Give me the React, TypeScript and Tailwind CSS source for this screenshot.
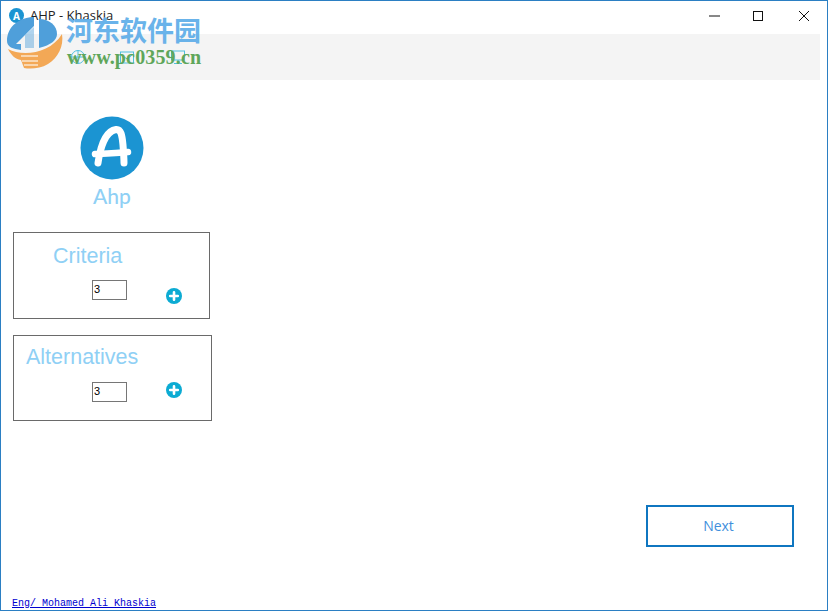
import React from "react";

function AhpLogo() {
  return (
    <svg width="64" height="64" viewBox="0 0 64 64">
      <circle cx="32" cy="32" r="31.5" fill="#1b94d2" />
      <path d="M18 47 C20 33 25 15 36 13.500 C41 13 42 19 43 29 C43.500 36 44 42 44 47" fill="none" stroke="#fff" strokeWidth="7" strokeLinecap="round" />
      <path d="M15 38 C26 37.500 38 37 48 36" fill="none" stroke="#fff" strokeWidth="6.500" strokeLinecap="round" />
    </svg>
  );
}

function AddIcon() {
  return (
    <svg width="16" height="16" viewBox="0 0 16 16">
      <circle cx="8" cy="8" r="8" fill="#0cabd3" />
      <path d="M8 4.200V11.800M4.200 8H11.800" stroke="#fff" strokeWidth="2.600" strokeLinecap="round" />
    </svg>
  );
}

function Watermark() {
  return (
    <div className="absolute left-[3px] top-[13px] flex items-start pointer-events-none">
      <svg width="60" height="56" viewBox="0 0 60 56">
        <path d="M3 27 C3 12 16 3 30 3 L30 12 L12 30 L17 30 L17 36 C9 35 3 33 3 27 Z" fill="#4f9fda" />
        <path d="M35 5 C46 5 53 12 53 20 C53 26 47 31 35 34 Z" fill="#4f9fda" />
        <path d="M21 21 L30 13 L30 34 L21 34 Z" fill="#4f9fda" opacity="0.450" />
        <path d="M4 35 C18 43 46 40 58 20 C60 32 54 44 44 50 C36 55 26 55 20 54 L17 46 C11 45 7 41 4 35 Z" fill="#f3a856" />
        <path d="M17 42 H34 M18 47 H34 M20 51 H34" stroke="#fff" strokeWidth="1.500" opacity="0.700" />
      </svg>
    </div>
  );
}

function WatermarkText() {
  return (
    <div className="absolute left-[65px] top-[11px] pointer-events-none">
      <div className="text-[27px] leading-[36px] font-bold text-[#62afe9] [font-family:'Noto_Sans_CJK_SC',sans-serif] opacity-95">河东软件园</div>
      <div className="text-[20px] leading-[22px] mt-[-2px] font-bold text-[#5fa65a] tracking-[0.15px] ml-[1px] [font-family:'Liberation_Serif',serif]">www.pc0359.cn</div>
    </div>
  );
}

function ToolIcon({ kind }: { kind: number }) {
  return (
    <svg width="16" height="16" viewBox="0 0 16 16" fill="none" stroke="#4fc0e0" strokeWidth="1">
      {kind === 0 && <><circle cx="8" cy="8" r="6.500" /><path d="M1.500 8H14.500M8 1.500V14.500" /></>}
      {kind === 1 && <><rect x="1.500" y="3" width="13" height="11" /><path d="M1.500 5L8 10L14.500 5" /></>}
      {kind === 2 && <><rect x="1.500" y="2" width="13" height="9" /><path d="M8 11V14M4 14.500H12" /></>}
    </svg>
  );
}

function Box({ title, w, h, titleCls, inputTop, addCls, mt }: { title: string; w: string; h: string; titleCls: string; inputTop: string; addCls: string; mt: string }) {
  return (
    <div className={`${w} ${h} ${mt} ml-[12px] border border-[#6a6a6a] [font-family:'Liberation_Sans',sans-serif]`}>
      <div className={`text-[21.5px] leading-[24px] text-[#8fd0f5] ${titleCls}`}>{title}</div>
      <div className={`flex items-start ml-[78px] ${inputTop}`}>
        <div className="w-[35px] h-[20px] border border-[#767676] text-[11px] leading-[16px] pl-[1px] text-black bg-white">3</div>
        <div className={addCls}><AddIcon /></div>
      </div>
    </div>
  );
}

export default function App() {
  return (
    <div className="relative w-[828px] h-[611px] overflow-hidden bg-white border border-[#2b7fc3] box-border">
      {/* title bar */}
      <div className="h-[33px] flex items-center pl-[8px] pb-[4px] [font-family:'Noto_Sans',sans-serif]">
        <div className="w-[15px] h-[15px] rounded-full bg-[#1b94d2] flex items-center justify-center text-white text-[10px] font-bold leading-none">A</div>
        <div className="ml-[6px] text-[13px] text-[#222] [font-family:'Open_Sans',sans-serif]">AHP - Khaskia</div>
        <div className="ml-auto flex items-center">
          <svg width="46" height="30" viewBox="0 0 46 30"><path d="M20 15H31" stroke="#111" strokeWidth="1" /></svg>
          <svg width="46" height="30" viewBox="0 0 46 30"><rect x="18.500" y="10.500" width="9" height="9" fill="none" stroke="#111" strokeWidth="1" /></svg>
          <svg width="46" height="30" viewBox="0 0 46 30"><path d="M18 10L28 20M28 10L18 20" stroke="#111" strokeWidth="1" /></svg>
        </div>
      </div>

      {/* toolbar */}
      <div className="w-[819px] h-[46px] bg-[#f4f4f4] flex items-center pl-[69px] gap-[33px]">
        <ToolIcon kind={0} />
        <ToolIcon kind={1} />
        <div className="ml-[2px]"><ToolIcon kind={2} /></div>
      </div>

      <div className="ml-[79px] mt-[36px] w-[64px] flex flex-col items-center">
        <AhpLogo />
        <div className="text-[21px] leading-[28px] mt-[2px] font-medium text-[#8fd0f5] [font-family:'Lato',sans-serif]">Ahp</div>
      </div>

      <Box title="Criteria" w="w-[197px]" h="h-[87px]" mt="mt-[22px]" titleCls="ml-[39px] mt-[11px]" inputTop="mt-[12px]" addCls="ml-[39px] mt-[8px]" />
      <Box title="Alternatives" w="w-[199px]" h="h-[86px]" mt="mt-[16px]" titleCls="ml-[12px] mt-[9px]" inputTop="mt-[13px]" addCls="ml-[39px] mt-[0px]" />

      {/* footer row */}
      <div className="flex justify-end mt-[84px] mr-[33px]">
        <button className="w-[148px] h-[42px] border-2 border-[#0f76c0] bg-white text-[#3f8fdc] text-[14px] pr-[3px] pb-[2px] [font-family:'Open_Sans',sans-serif]">Next</button>
      </div>
      <a className="block ml-[11px] mt-[51px] text-[10px] leading-[12px] underline text-[#0000d0] [font-family:'Liberation_Mono',monospace]" href="#">Eng/ Mohamed Ali Khaskia</a>

      <Watermark />
      <WatermarkText />
    </div>
  );
}
